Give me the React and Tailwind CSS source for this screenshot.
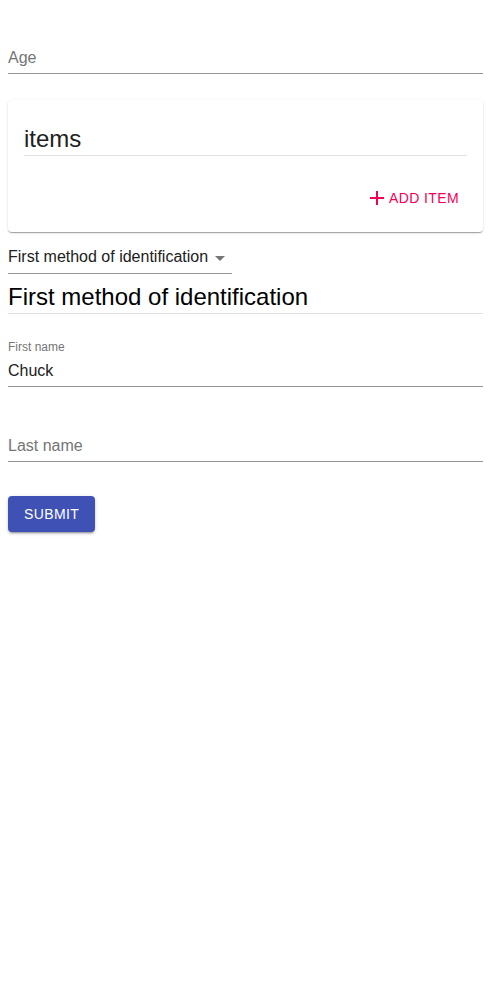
import React from "react";

export default function App() {
  return (
    <div className="min-h-[1000px] bg-white px-2 font-['Liberation_Sans',Arial,sans-serif]">
      {/* Age */}
      <div className="pt-[42px]">
        <div className="h-[32px] border-b border-[#949494] pt-[6px] text-[16px] leading-[19px] text-[#757575]">
          Age
        </div>
      </div>

      {/* Card */}
      <div className="mt-[26px] rounded-[4px] bg-white px-4 pt-[23px] pb-4 shadow-[0px_2px_1px_-1px_rgba(0,0,0,0.2),0px_1px_1px_0px_rgba(0,0,0,0.14),0px_1px_3px_0px_rgba(0,0,0,0.12)]">
        <div className="h-[33px] border-b border-[#e0e0e0] text-[24px] leading-[32px] text-[#212121]">
          items
        </div>
        <div className="mt-6 flex justify-end">
          <button className="flex h-9 items-center px-2 text-[14px] uppercase tracking-[0.02857em] text-[#f50057]">
            <svg width="24" height="24" viewBox="0 0 24 24" className="-ml-[4px] mr-0">
              <path d="M19 13h-6v6h-2v-6H5v-2h6V5h2v6h6v2z" fill="#f50057" />
            </svg>
            <span>Add item</span>
          </button>
        </div>
      </div>

      {/* Select */}
      <div className="relative mt-[9px] h-[33px] w-[224px] whitespace-nowrap border-b border-[#949494] pt-[6px] text-[16px] leading-[19px] text-[#212121]">
        First method of identification
        <svg width="24" height="24" viewBox="0 0 24 24" className="absolute left-[200px] top-[5px]">
          <path d="M7 10l5 5 5-5z" fill="#757575" />
        </svg>
      </div>

      {/* Heading */}
      <div className="mt-[7px] h-[33px] border-b border-[#e0e0e0] text-[24px] leading-[32px] text-black">
        First method of identification
      </div>

      {/* First name */}
      <div className="mt-[26px] h-[14px] text-[12px] leading-[14px] text-[#757575]">First name</div>
      <div className="mt-[1px] h-[32px] border-b border-[#949494] pt-[6px] text-[16px] leading-[19px] text-[#212121]">
        Chuck
      </div>

      {/* Last name */}
      <div className="mt-[43px] h-[32px] border-b border-[#949494] pt-[6px] text-[16px] leading-[19px] text-[#757575]">
        Last name
      </div>

      {/* Submit */}
      <button className="mt-[34px] h-9 rounded-[4px] bg-[#3f51b5] px-4 text-[14px] font-medium uppercase tracking-[0.02857em] text-white shadow-[0px_3px_1px_-2px_rgba(0,0,0,0.2),0px_2px_2px_0px_rgba(0,0,0,0.14),0px_1px_5px_0px_rgba(0,0,0,0.12)]">
        Submit
      </button>
    </div>
  );
}
